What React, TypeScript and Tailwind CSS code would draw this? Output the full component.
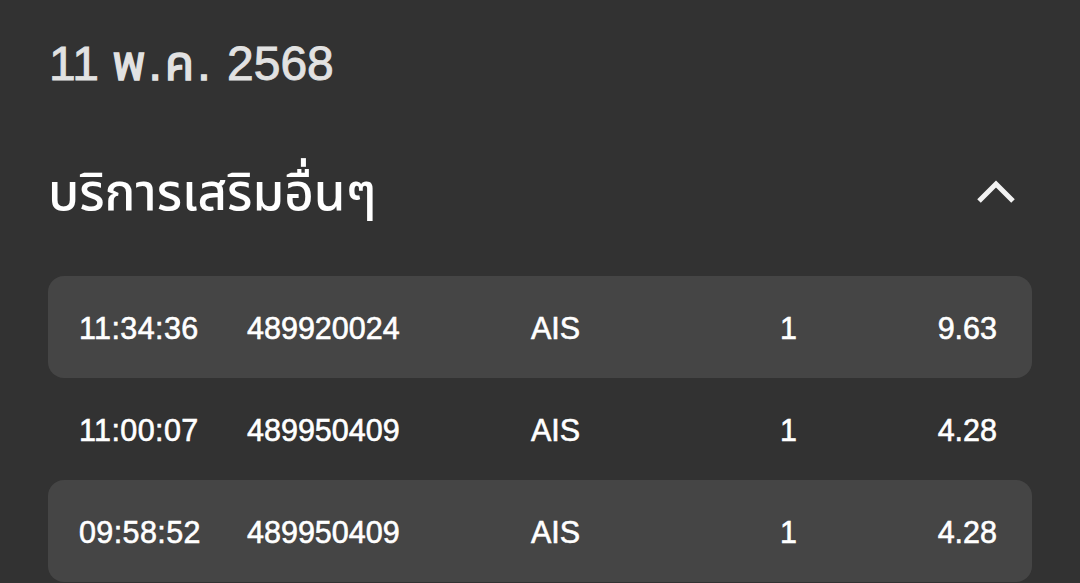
import React from "react";

const ROWS = [
  { time: "11:34:36", ref: "489920024", op: "AIS", qty: "1", amount: "9.63" },
  { time: "11:00:07", ref: "489950409", op: "AIS", qty: "1", amount: "4.28" },
  { time: "09:58:52", ref: "489950409", op: "AIS", qty: "1", amount: "4.28" },
];

export default function App() {
  return (
    <div
      className="w-[1080px] h-[583px] overflow-hidden bg-[#323232] text-white"
      style={{ fontFamily: '"Liberation Sans", "Noto Sans Thai", "Noto Sans", sans-serif' }}
    >
      {/* Date */}
      <div className="pl-[49px] pt-[36px] h-[130px]">
        <h1 className="text-[48px] leading-[56px] text-[#e2e2e2] [-webkit-text-stroke:0.9px_#e2e2e2]">
          11 <span className="tracking-[3px] [-webkit-text-stroke:1.4px_#e2e2e2]">พ.ค.</span> 2568
        </h1>
      </div>

      {/* Section header */}
      <div className="flex items-center justify-between pl-[48px] pr-[64px] h-[126px] pb-[2px]">
        <h2
          className="text-[51px] leading-[60px] font-medium"
          style={{ fontFamily: 'Inter, "Noto Sans Thai", "Noto Sans", sans-serif' }}
        >
          บริการเสริมอื่นๆ
        </h2>
        <svg width="40" height="26" viewBox="0 0 40 26" fill="none">
          <path d="M3 22 L20 5 L37 22" stroke="#f2f2f2" strokeWidth="5" />
        </svg>
      </div>

      {/* Rows */}
      <div className="mx-[48px] pt-[20px] flex flex-col">
        {ROWS.map((r, i) => (
          <div
            key={i}
            className={`flex items-center h-[102px] pt-[4px] pl-[31px] pr-[35px] text-[30.5px] [-webkit-text-stroke:0.6px_white] rounded-[16px] ${
              i % 2 === 0 ? "bg-[#454545]" : ""
            }`}
          >
            <span className="w-[168px] tracking-[0.4px]">{r.time}</span>
            <span className="w-[284px]">{r.ref}</span>
            <span className="w-[249px]">{r.op}</span>
            <span className="w-[120px]">{r.qty}</span>
            <span className="flex-1 text-right">{r.amount}</span>
          </div>
        ))}
      </div>
    </div>
  );
}
